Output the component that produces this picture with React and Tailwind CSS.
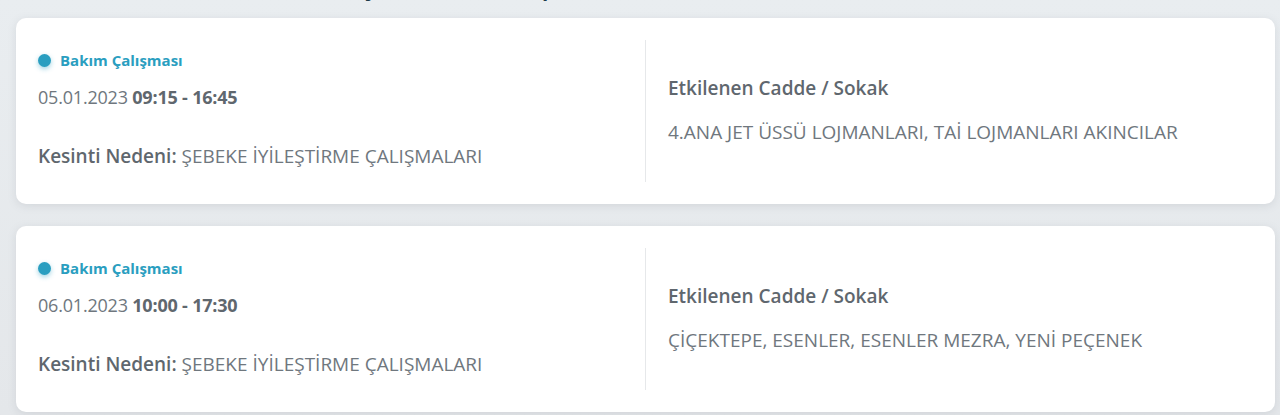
const outages = [
  {
    type: 'Bakım Çalışması',
    date: '05.01.2023',
    time: '09:15 - 16:45',
    reason: 'ŞEBEKE İYİLEŞTİRME ÇALIŞMALARI',
    streets: '4.ANA JET ÜSSÜ LOJMANLARI, TAİ LOJMANLARI AKINCILAR',
  },
  {
    type: 'Bakım Çalışması',
    date: '06.01.2023',
    time: '10:00 - 17:30',
    reason: 'ŞEBEKE İYİLEŞTİRME ÇALIŞMALARI',
    streets: 'ÇİÇEKTEPE, ESENLER, ESENLER MEZRA, YENİ PEÇENEK',
  },
];

function OutageCard({ item }) {
  return (
    <div className="bg-white rounded-[10px] shadow-[0_2px_8px_rgba(120,130,140,0.18)] px-[22px] py-[22px] flex">
      {/* Left: type, time, reason */}
      <div className="w-[607px] flex flex-col pt-[12px]">
        <div className="flex items-center gap-[9px] h-[16px]">
          <span className="w-[13px] h-[13px] rounded-full bg-[#2a9ec0] shadow-[0_2px_5px_rgba(42,158,192,0.45)]" />
          <span className="text-[15px] font-bold text-[#2a9ec0] leading-none">{item.type}</span>
        </div>
        <p className="mt-[20px] text-[18px] leading-none text-[#6f777e] tracking-[-0.2px]">
          {item.date} <span className="font-bold text-[#5f676e]">{item.time}</span>
        </p>
        <p className="mt-[41px] text-[19px] leading-none text-[#6f777e]">
          <span className="font-semibold text-[#5f676e]">Kesinti Nedeni:</span> {item.reason}
        </p>
      </div>

      {/* Right: affected streets */}
      <div className="flex-1 border-l border-[#e6e8ea] pl-[22px] pt-[39px] min-h-[142px]">
        <p className="text-[19px] font-semibold leading-none text-[#5f676e]">Etkilenen Cadde / Sokak</p>
        <p className="mt-[25px] text-[19px] leading-none text-[#6f777e]">{item.streets}</p>
      </div>
    </div>
  );
}

export default function App() {
  return (
    <div className="h-[415px] overflow-hidden bg-gradient-to-b from-[#e9edf0] to-[#e4e7ea]" style={{ fontFamily: '"Open Sans", "Noto Sans", sans-serif' }}>
      <h2 className="-mt-[29px] pl-[80px] text-[26px] font-semibold leading-[28px] text-[#1d3a4b]">
        Akıncılar, Yenimahalle yakası kesinti planı
      </h2>
      <div className="ml-4 mr-[5px] mt-[19px] flex flex-col gap-[22px]">
        {outages.map((o, i) => (
          <OutageCard key={i} item={o} />
        ))}
      </div>
    </div>
  );
}
